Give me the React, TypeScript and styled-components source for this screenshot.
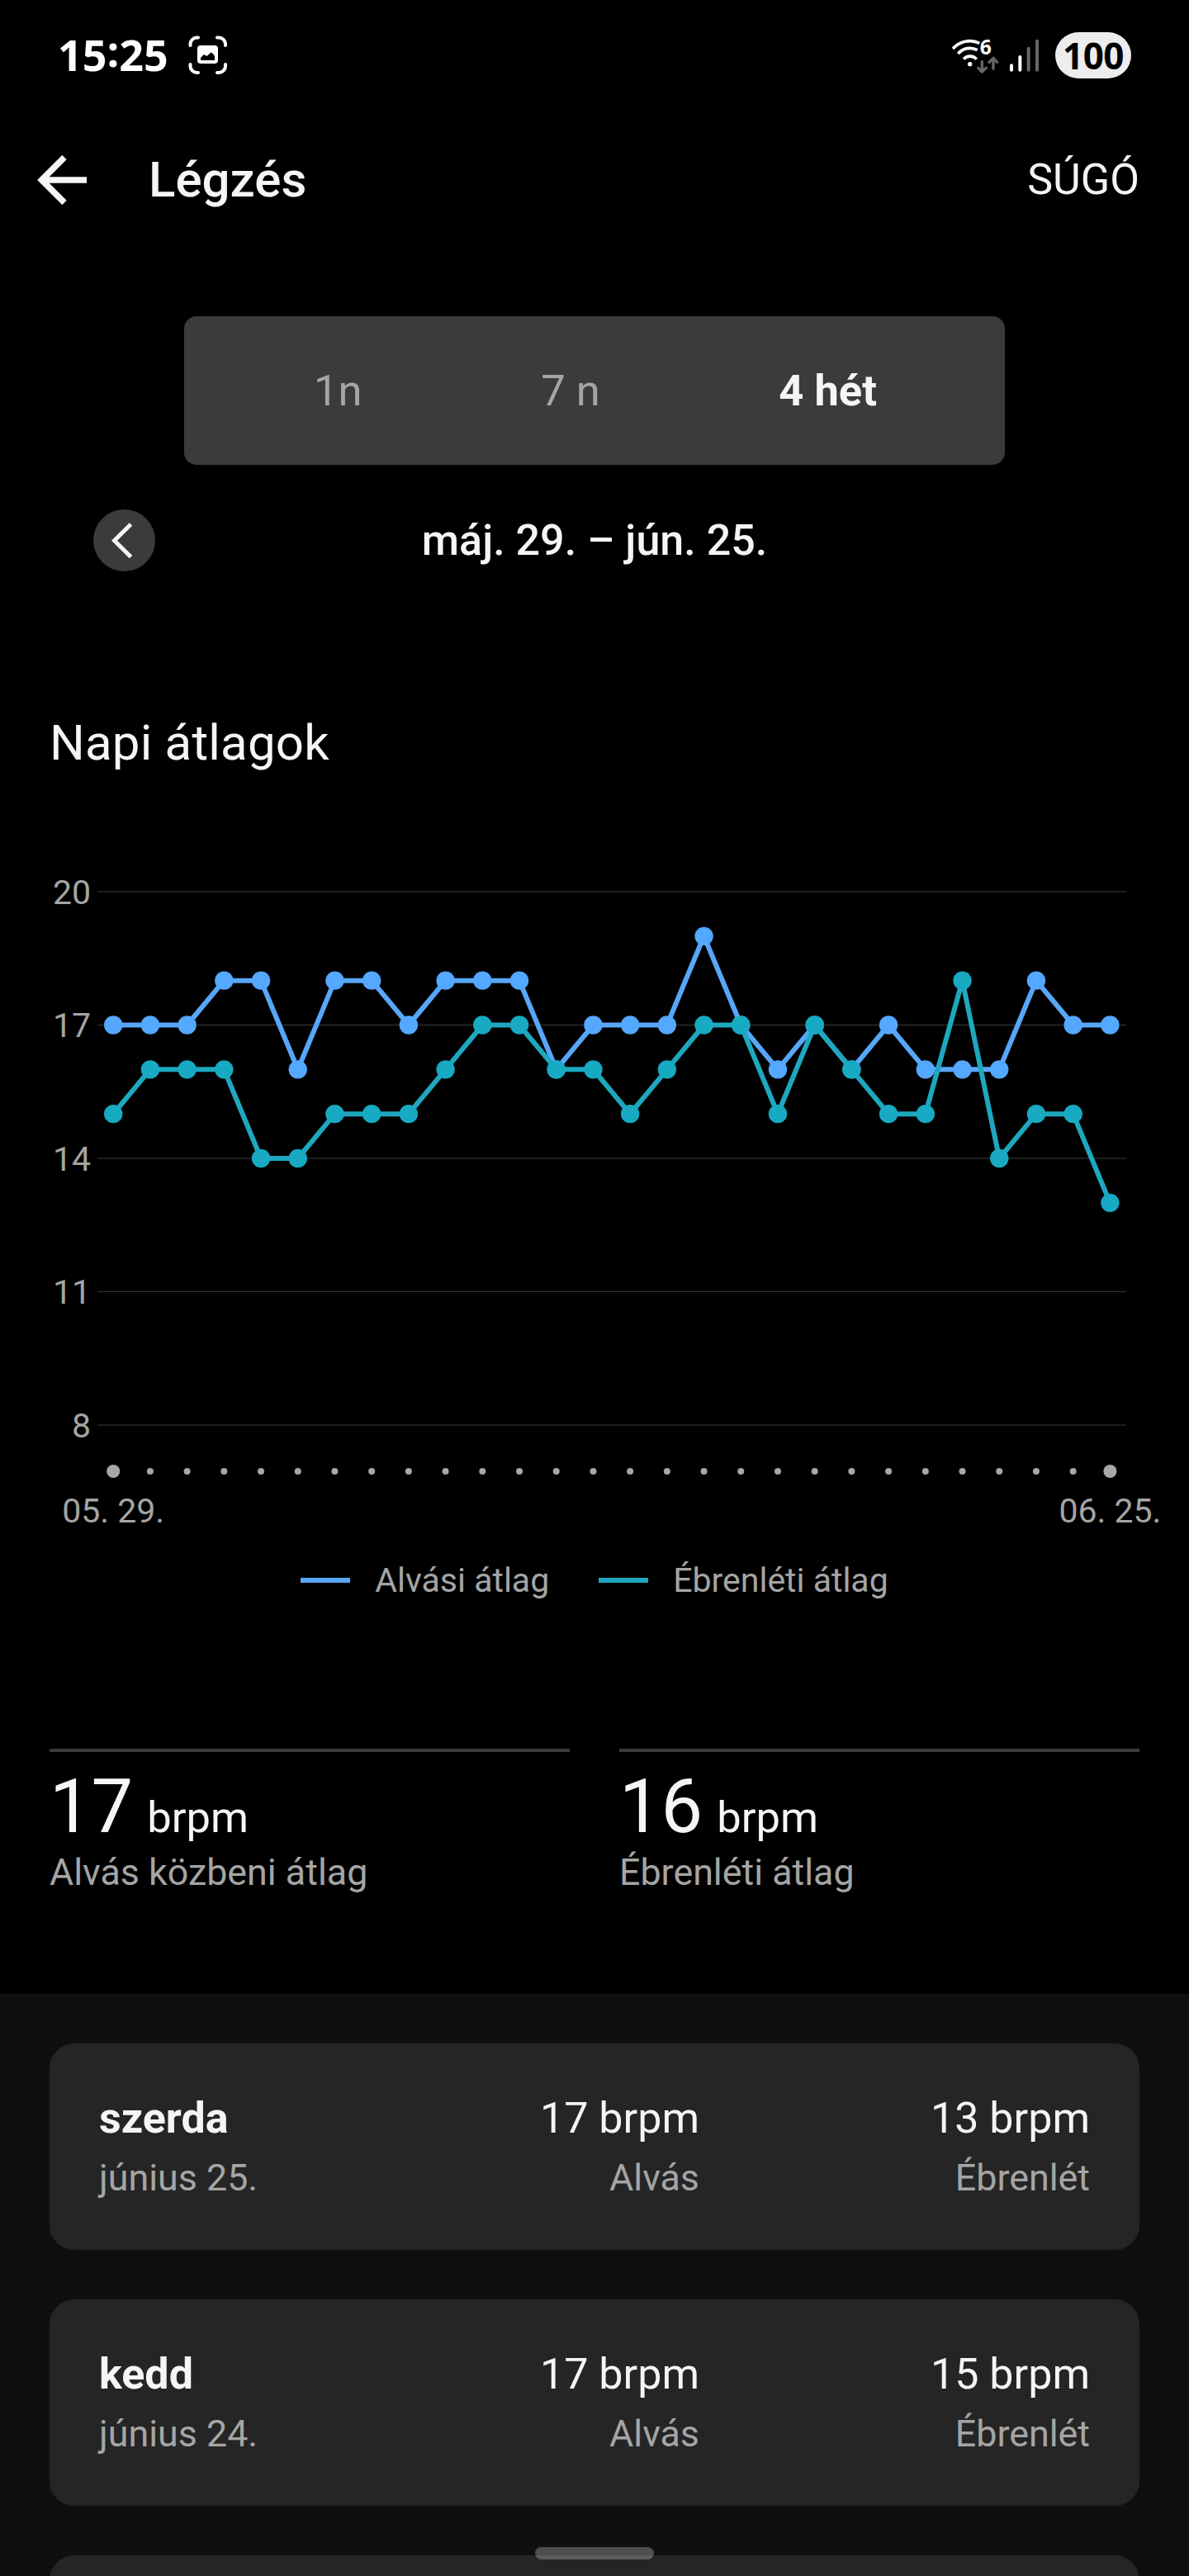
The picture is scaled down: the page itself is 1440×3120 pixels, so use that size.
import React from "react";
import styled, { createGlobalStyle } from "styled-components";

const GlobalStyle = createGlobalStyle`
  body { margin: 0; background: #000; }
`;

const ink = "#f5f5f5";
const muted = "#a5a5a5";
const surface = "#3b3b3b";

const Screen = styled.div`
  position: relative;
  display: flex;
  flex-direction: column;
  width: 1440px;
  height: 3120px;
  overflow: hidden;
  background: #000;
  color: ${ink};
  font-family: Roboto, "Liberation Sans", sans-serif;

  & > * {
    flex-shrink: 0;
  }
`;

const StatusBar = styled.div`
  display: flex;
  align-items: center;
  height: 134px;
  padding: 0 70px 0 70px;
  box-sizing: border-box;
`;

const Clock = styled.div`
  display: flex;
  font: 700 52px/60px "Open Sans", "Noto Sans", sans-serif;
  color: #fff;
  margin-top: -3px;
`;

const ClockColon = styled.span`
  margin-top: -5px;
`;

const CaptureIcon = styled.svg`
  margin-left: 24px;
`;

const StatusRight = styled.div`
  display: flex;
  align-items: center;
  margin-left: auto;
`;

const Network = styled.svg`
  overflow: visible;
`;

const Battery = styled.div`
  display: flex;
  align-items: center;
  justify-content: center;
  width: 92px;
  height: 56px;
  margin-left: 18px;
  border-radius: 28px;
  background: #ededed;
  color: #000;
  font: 700 44px/56px "Open Sans", "Noto Sans", sans-serif;
  letter-spacing: -0.5px;
`;

const Header = styled.header`
  display: flex;
  align-items: center;
  height: 168px;
  padding: 0 60px 0 45px;
`;

const Title = styled.h1`
  flex: 1;
  margin: 0 0 0 74px;
  font-size: 60px;
  font-weight: 500;
  line-height: 70px;
`;

const HelpAction = styled.span`
  font-size: 52px;
  line-height: 62px;
`;

const Tabs = styled.nav`
  display: flex;
  align-items: center;
  justify-content: space-between;
  width: 994px;
  height: 180px;
  margin: 81px auto 0;
  padding: 0 155px 0 157px;
  box-sizing: border-box;
  border-radius: 15px;
  background: ${surface};
`;

const Tab = styled.span<{ $active?: boolean }>`
  font-size: 52.5px;
  line-height: 62px;
  font-weight: ${(p) => (p.$active ? 700 : 400)};
  color: ${(p) => (p.$active ? ink : muted)};
`;

const RangeRow = styled.div`
  display: grid;
  grid-template-columns: 75px 1fr 75px;
  align-items: center;
  height: 75px;
  margin-top: 54px;
  padding: 0 113px;
`;

const RoundButton = styled.div`
  display: flex;
  width: 75px;
  height: 75px;
  border-radius: 50%;
  background: ${surface};
`;

const RangeLabel = styled.div`
  text-align: center;
  font-size: 52px;
  font-weight: 500;
  line-height: 62px;
`;

const SectionTitle = styled.h2`
  margin: 173px 0 105px 60px;
  font-size: 60px;
  font-weight: 400;
  line-height: 70px;
  letter-spacing: 0.2px;
`;

const Chart = styled.svg`
  display: block;
`;

const AxisText = styled.text`
  font: 400 41px Roboto, sans-serif;
  fill: ${muted};
`;

const Legend = styled.div`
  display: flex;
  justify-content: center;
  align-items: center;
  gap: 60px;
  height: 60px;
  margin-top: 14px;
`;

const LegendItem = styled.div`
  display: flex;
  align-items: center;
  gap: 30px;
  font-size: 41px;
  line-height: 60px;
  color: ${muted};
`;

const LegendLine = styled.span<{ $color: string }>`
  width: 60px;
  height: 6px;
  background: ${(p) => p.$color};
`;

const Stats = styled.section`
  display: grid;
  grid-template-columns: 1fr 1fr;
  column-gap: 60px;
  align-items: start;
  height: 297px;
  margin-top: 174px;
  padding: 0 60px;
`;

const Stat = styled.div`
  border-top: 4px solid ${surface};
  padding-top: 17px;
`;

const StatValue = styled.div`
  display: flex;
  align-items: baseline;
  height: 100px;
  font-size: 90px;
  line-height: 100px;
`;

const StatUnit = styled.span`
  margin-left: 17px;
  font-size: 52.5px;
`;

const Caption = styled.div`
  font-size: 44.8px;
  line-height: 54px;
  color: ${muted};
`;

const StatCaption = styled(Caption)`
  margin-top: 2px;
`;

const DayList = styled.section`
  display: flex;
  flex-direction: column;
  gap: 60px;
  padding: 60px 60px 0;
  background: #0f0f0f;
`;

const DayCard = styled.article`
  display: grid;
  grid-template-columns: 400px 327px 1fr;
  height: 250px;
  padding: 60px;
  box-sizing: border-box;
  border-radius: 30px;
  background: #252525;
`;

const Cell = styled.div<{ $end?: boolean }>`
  text-align: ${(p) => (p.$end ? "right" : "left")};
`;

const CellTitle = styled.div<{ $bold?: boolean }>`
  margin-bottom: 14px;
  font-size: 52px;
  line-height: 62px;
  font-weight: ${(p) => (p.$bold ? 700 : 400)};
`;

const GestureHandle = styled.div`
  position: absolute;
  left: 648px;
  bottom: 20px;
  width: 144px;
  height: 15px;
  border-radius: 8px;
  background: rgba(220, 220, 220, 0.31);
`;

const sleep = [17, 17, 17, 18, 18, 16, 18, 18, 17, 18, 18, 18, 16, 17, 17, 17, 19, 17, 16, 17, 16, 17, 16, 16, 16, 18, 17, 17];
const awake = [15, 16, 16, 16, 14, 14, 15, 15, 15, 16, 17, 17, 16, 16, 15, 16, 17, 17, 15, 17, 16, 15, 15, 18, 14, 15, 15, 13];

const px = (i: number) => 137.2 + i * 44.71;
const py = (v: number) => 40 + (20 - v) * (161.5 / 3);

function Series({ data, line, dot }: { data: number[]; line: string; dot: string }) {
  return (
    <g>
      <polyline points={data.map((v, i) => `${px(i)},${py(v)}`).join(" ")} fill="none" stroke={line} strokeWidth={6} />
      {data.map((v, i) => (
        <circle key={i} cx={px(i)} cy={py(v)} r={11.2} fill={dot} />
      ))}
    </g>
  );
}

function AveragesChart() {
  return (
    <Chart width={1440} height={830} viewBox="0 0 1440 830">
      {[20, 17, 14, 11, 8].map((v) => (
        <g key={v}>
          <line x1={118} x2={1364} y1={py(v)} y2={py(v)} stroke={surface} strokeWidth={1} />
          <AxisText x={110} y={py(v) + 14.5} textAnchor="end">{v}</AxisText>
        </g>
      ))}
      <Series data={sleep} line="#58a6f8" dot="#54a8ff" />
      <Series data={awake} line="#1ea8bf" dot="#17aac2" />
      {sleep.map((_, i) => (
        <circle key={i} cx={px(i)} cy={742} r={i === 0 || i === 27 ? 8 : 4} fill="#a8a8a8" />
      ))}
      <AxisText x={px(0)} y={804} textAnchor="middle">05. 29.</AxisText>
      <AxisText x={px(27)} y={804} textAnchor="middle">06. 25.</AxisText>
    </Chart>
  );
}

function NetworkIcons() {
  return (
    <Network width="109" height="46" viewBox="153 132 327 138" fill="none" strokeLinecap="round" strokeLinejoin="round">
      <g stroke="#fff" strokeWidth="11" strokeLinecap="butt">
        <path d="M162 177A82 82 0 0 1 259 157" />
        <path d="M181 195A56 56 0 0 1 251 182" />
        <path d="M201 215A31 31 0 0 1 248 215" />
      </g>
      <circle cx="224" cy="233" r="8" fill="#fff" />
      <text x="260" y="197" fill="#fff" fontFamily='"Open Sans", sans-serif' fontWeight="700" fontSize="74">6</text>
      <g stroke="#666" strokeWidth="10">
        <path d="M268 224V260M254 247L268 261L283 247" />
        <path d="M309 250V212M294 226L309 211L323 226" />
      </g>
      <g strokeWidth="12">
        <path d="M375 238V254M406 207V254" stroke="#fff" />
        <path d="M437 176V254M468 149V254" stroke="#666" />
      </g>
    </Network>
  );
}

const days = [
  { name: "szerda", date: "június 25.", sleep: 17, awake: 13 },
  { name: "kedd", date: "június 24.", sleep: 17, awake: 15 },
];

export default function App() {
  return (
    <Screen>
      <GlobalStyle />
      <StatusBar>
        <Clock>
          15<ClockColon>:</ClockColon>25
        </Clock>
        <CaptureIcon width="48" height="48" viewBox="0 0 48 48" fill="none">
          <path
            d="M2.5 12V10.500A8 8 0 0 1 10.500 2.500H12M35 2.500H37A8 8 0 0 1 45 10.500V12M45 35V37A8 8 0 0 1 37 45H35M12 45H10.500A8 8 0 0 1 2.500 37V35"
            stroke="#fff"
            strokeWidth="4"
            strokeLinecap="round"
          />
          <rect x="11" y="12" width="25" height="22" rx="4" fill="#fff" />
          <path d="M15 30V27L19 23L22.500 25L27.500 20.500L30 22L32 25V30Z" fill="#000" />
        </CaptureIcon>
        <StatusRight>
          <NetworkIcons />
          <Battery>100</Battery>
        </StatusRight>
      </StatusBar>

      <Header>
        <svg width="61" height="60" viewBox="0 0 61 60" fill="none" stroke={ink} strokeWidth="7.600">
          <path d="M33 2.500L5.500 30L33 57.500M6 30H60" />
        </svg>
        <Title>Légzés</Title>
        <HelpAction>SÚGÓ</HelpAction>
      </Header>

      <Tabs>
        <Tab>1n</Tab>
        <Tab>7 n</Tab>
        <Tab $active>4 hét</Tab>
      </Tabs>

      <RangeRow>
        <RoundButton>
          <svg width="75" height="75" viewBox="0 0 75 75" fill="none" stroke={ink} strokeWidth="5">
            <path d="M45.500 18L25.500 37.700L45.500 57.500" />
          </svg>
        </RoundButton>
        <RangeLabel>máj. 29. – jún. 25.</RangeLabel>
      </RangeRow>

      <SectionTitle>Napi átlagok</SectionTitle>
      <AveragesChart />
      <Legend>
        <LegendItem>
          <LegendLine $color="#58a6f8" />
          Alvási átlag
        </LegendItem>
        <LegendItem>
          <LegendLine $color="#1ea8bf" />
          Ébrenléti átlag
        </LegendItem>
      </Legend>

      <Stats>
        <Stat>
          <StatValue>
            17<StatUnit>brpm</StatUnit>
          </StatValue>
          <StatCaption>Alvás közbeni átlag</StatCaption>
        </Stat>
        <Stat>
          <StatValue>
            16<StatUnit>brpm</StatUnit>
          </StatValue>
          <StatCaption>Ébrenléti átlag</StatCaption>
        </Stat>
      </Stats>

      <DayList>
        {days.map((d) => (
          <DayCard key={d.date}>
            <Cell>
              <CellTitle $bold>{d.name}</CellTitle>
              <Caption>{d.date}</Caption>
            </Cell>
            <Cell $end>
              <CellTitle>{d.sleep} brpm</CellTitle>
              <Caption>Alvás</Caption>
            </Cell>
            <Cell $end>
              <CellTitle>{d.awake} brpm</CellTitle>
              <Caption>Ébrenlét</Caption>
            </Cell>
          </DayCard>
        ))}
        <DayCard />
      </DayList>
      <GestureHandle />
    </Screen>
  );
}
